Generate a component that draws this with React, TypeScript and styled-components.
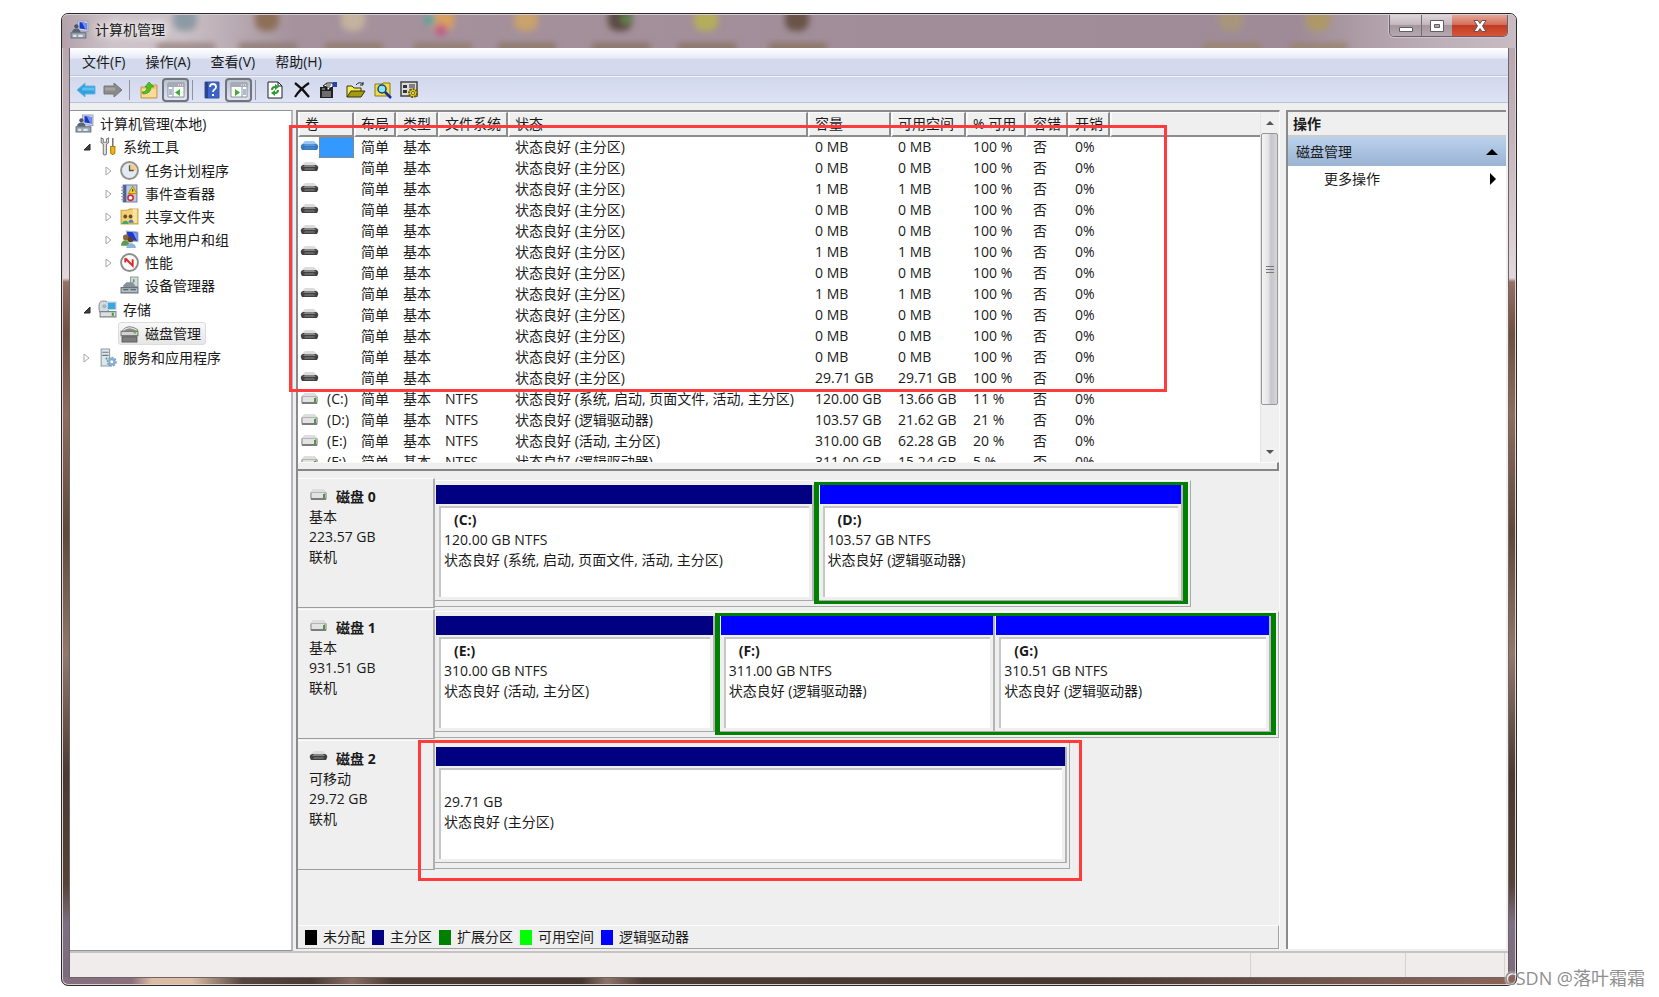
import React from 'react';
import styled, { createGlobalStyle, css } from 'styled-components';

const GlobalStyle = createGlobalStyle`
  * { box-sizing: border-box; }
  body {
    margin: 0;
    background: #fff;
    color: #1a1a1a;
    font-family: 'Open Sans', 'Noto Sans CJK SC', sans-serif;
    font-size: 14px;
    line-height: 20px;
  }
  button { font: inherit; color: inherit; border: 0; background: none; padding: 0; }
  ul { list-style: none; margin: 0; padding: 0; }
  svg { display: block; flex: none; }
`;

/* ---------- window frame ---------- */

const Page = styled.div`
  position: relative;
  min-height: 100vh;
  padding: 13px 142px 11px 61px;
  display: flex;
`;

const Window = styled.div`
  flex: 1;
  min-width: 0;
  display: flex;
  flex-direction: column;
  padding: 0 8px 8px;
  border: 1px solid #2c282b;
  border-radius: 7px;
  box-shadow: inset 0 0 0 1px #d9d0d5;
  background:
    linear-gradient(90deg, #84707f 0, #8c6f7c 70px, #dcbca2 90px, #dcbca2 130px, #55473f 180px, #493b33 250px, #8a6f62 290px, #493a31 330px, #453730 520px, #8f7567 545px, #4b3c33 580px, #46372f 70%, #7a5a4f 90%, #8c6457 100%) bottom / 100% 8px no-repeat,
    linear-gradient(180deg, #b3a2ab 0, #c3b3ba 120px, #e2d8dc 264px, #957064 268px, #6f4f3f 320px, #8d6c5d 400px, #5f4839 520px, #93776b 640px, #4b3a30 760px, #564236 870px, #7e7084 910px, #7a6b7a 100%);
`;

const TitleBar = styled.header`
  position: relative;
  height: 34px;
  margin: 0 -8px;
  padding: 0 8px;
  border-radius: 6px 6px 0 0;
  border-top: 1px solid #d6ced2;
  overflow: hidden;
  display: flex;
  justify-content: space-between;
  background: linear-gradient(90deg, #b3a1aa 0, #cdc3c8 50px, #cbc1c6 120px, #a5929d 230px, #a18d99 60%, #9e8b97 85%, #b9abb3 93%, #c8bcc2 100%);
`;

const Backdrop = styled.svg`
  position: absolute;
  inset: 0;
`;

const Title = styled.h1`
  position: relative;
  margin: 0;
  padding-bottom: 4px;
  display: flex;
  align-items: center;
  gap: 6px;
  font-size: 14px;
  font-weight: 400;
  text-shadow: 0 0 8px #fff, 0 0 8px #fff;
`;

const Captions = styled.div`
  position: relative;
  display: flex;
  height: 22px;
  border: 1px solid #6b5f66;
  border-top: 0;
  border-radius: 0 0 5px 5px;
  overflow: hidden;
  box-shadow: 0 0 0 1px #cfc4ca;
`;

const CaptionButton = styled.button<{ $close?: boolean }>`
  width: ${p => (p.$close ? 55 : 31)}px;
  display: grid;
  place-items: center;
  border-left: ${p => (p.$close ? 0 : 1)}px solid #776a71;
  background: ${p =>
    p.$close
      ? 'linear-gradient(180deg, #e6a596 0, #d2705c 45%, #c23a22 50%, #d4573c 100%)'
      : 'linear-gradient(180deg, #ddd5d9 0, #c4b8be 45%, #a5979e 50%, #b5a8ae 100%)'};
  &:first-child { border-left: 0; }
`;

const Client = styled.div`
  flex: 1;
  display: flex;
  flex-direction: column;
  background: #efefef;
  box-shadow: 0 0 0 1px #6d6468;
`;

/* ---------- menu and toolbar ---------- */

const MenuBar = styled.nav`
  height: 28px;
  padding-left: 2px;
  display: flex;
  align-items: center;
  border-bottom: 1px solid #c3c6d2;
  background: linear-gradient(180deg, #fff 0, #e8ebf7 10px, #d4daed 11px, #d4daed 100%);
`;

const MenuItem = styled.button`
  padding: 0 10px;
`;

const ToolBar = styled.div`
  height: 27px;
  padding-left: 2px;
  display: flex;
  align-items: center;
  border-top: 1px solid #f3f5fb;
  border-bottom: 1px solid #b9c2d8;
  background: linear-gradient(180deg, #d2d8ec, #dde2f4);
`;

const ToolButton = styled.button<{ $pressed?: boolean }>`
  width: 27px;
  height: 24px;
  display: grid;
  place-items: center;
  border-radius: 4px;
  ${p =>
    p.$pressed &&
    css`
      border: 2px solid #6f757f;
      background: linear-gradient(180deg, #bcc2cf, #dfe3ee);
    `}
`;

const ToolSeparator = styled.span`
  width: 1px;
  height: 20px;
  margin: 0 5px 0 3px;
  background: #8d93a3;
`;

/* ---------- three panes ---------- */

const Panes = styled.div`
  flex: 1;
  padding-top: 7px;
  display: grid;
  grid-template-columns: 223px minmax(0, 1fr) 220px;
  column-gap: 3px;
  padding-right: 2px;
`;

const TreePane = styled.aside`
  background: #fff;
  border: 1px solid #8f949c;
  border-left: 0;
  border-right-width: 2px;
  border-right-color: #b4b7bd;
  padding: 1px 0 0 1px;
`;

const Branch = styled.ul`
  padding: 1px 0;
`;

const TreeRow = styled.div<{ $level: number }>`
  height: 23px;
  display: flex;
  align-items: center;
  padding-left: ${p => (p.$level === 0 ? 2 : p.$level * 22 - 13)}px;
`;

const Twisty = styled.span`
  width: 16px;
  padding-left: 3px;
`;

const TreeLabel = styled.span<{ $selected?: boolean }>`
  height: 23px;
  display: flex;
  align-items: center;
  gap: 6px;
  padding: 0 4px 0 1px;
  border: 1px solid ${p => (p.$selected ? '#dcdcdc' : 'transparent')};
  border-radius: 3px;
  background: ${p => (p.$selected ? 'linear-gradient(180deg, #f8f8f8, #e6e6e6)' : 'none')};
`;

const CenterPane = styled.main`
  position: relative;
  margin: 0 3px 2px 0;
  display: flex;
  flex-direction: column;
  border-top: 2px solid #8a8a8a;
  border-left: 2px solid #8a8a8a;
  border-right: 1px solid #fafafa;
`;

const ActionPane = styled.aside`
  margin-bottom: 2px;
  background: #fff;
  border-top: 2px solid #8a8a8a;
  border-left: 2px solid #8a8a8a;
`;

/* ---------- volume list ---------- */

const VolumeArea = styled.section`
  display: flex;
  height: 350px;
  background: #fff;
`;

const VolumeClip = styled.div`
  flex: 1;
  min-width: 0;
  overflow: hidden;
`;

const VolumeTable = styled.table`
  width: 100%;
  table-layout: fixed;
  border-collapse: separate;
  border-spacing: 0;
  white-space: nowrap;

  th {
    height: 25px;
    padding: 0 0 0 5px;
    text-align: left;
    font-weight: 400;
    background: #efefef;
    border-right: 2px solid #8c8c8c;
    border-bottom: 2px solid #8c8c8c;
    border-left: 2px solid #fbfbfb;
    border-top: 1px solid #fbfbfb;
  }
  th:last-child { border-right: 0; }
  td {
    height: 21px;
    padding: 0 0 1px 7px;
    line-height: 20px;
    vertical-align: top;
  }
  td:first-child { padding: 0 0 0 2px; }
`;

const VolumeName = styled.span`
  display: flex;
  align-items: flex-start;
  height: 21px;

  svg { margin-top: 4px; }
`;

const DriveLetter = styled.span<{ $selected?: boolean }>`
  flex: 1;
  height: 21px;
  padding-left: 8px;
  ${p =>
    p.$selected &&
    css`
      background: #3399ff;
      border: 1px dotted #c8793a;
    `}
`;

const ScrollBar = styled.div`
  width: 19px;
  padding-right: 1px;
  display: flex;
  flex-direction: column;
  background: #f0f0f0;
  border-left: 1px solid #e4e4e4;
`;

const ScrollArrow = styled.button`
  height: 21px;
  display: grid;
  place-items: center;
`;

const ScrollTrack = styled.div`
  flex: 1;
`;

const ScrollThumb = styled.div`
  height: 272px;
  display: grid;
  place-items: center;
  border: 1px solid #979797;
  border-radius: 2px;
  background: linear-gradient(90deg, #f4f4f4 0, #e6e6e8 40%, #c6c6ca 60%, #d6d6da 100%);
`;

const Splitter = styled.div`
  height: 9px;
  border-top: 1px solid #fafafa;
  border-bottom: 2px solid #858585;
  border-right: 2px solid #858585;
`;

/* ---------- graphical disk view ---------- */

const DiskList = styled.section`
  flex: 1;
  padding-top: 7px;
`;

const DiskRow = styled.div`
  height: 131px;
  display: flex;
`;

const DiskInfo = styled.div`
  flex: none;
  width: 137px;
  height: 130px;
  padding: 8px 0 0 11px;
  border-top: 1px solid #fcfcfc;
  border-right: 2px solid #b0b0b0;
  border-bottom: 1px solid #9c9c9c;
`;

const DiskTitle = styled.h2`
  margin: 0;
  display: flex;
  gap: 8px;
  font-size: 14px;
  line-height: 20px;

  svg { margin-top: 2px; }
`;

const Line = styled.div`
  height: 20px;
  white-space: nowrap;
`;

const Track = styled.div<{ $share: number }>`
  position: relative;
  flex: ${p => p.$share} 1 0;
  min-width: 0;
  height: 127px;
  margin-top: 2px;
  padding: 1px 2px 2px 0;
  display: flex;
  border-top: 1px solid #fcfcfc;
  border-right: 1px solid #a8a8a8;
  border-bottom: 1px solid #a8a8a8;
`;

const TrackRest = styled.div<{ $share: number }>`
  flex: ${p => p.$share} 1 0;
`;

const Segment = styled.div<{ $share: number; $primary?: boolean }>`
  flex: ${p => p.$share} 1 0;
  min-width: 0;
  margin: ${p => (p.$primary ? '3px 0' : '0')};
  display: flex;
  flex-direction: column;
  border-right: 2px solid #b4b4b4;
  border-bottom: 1px solid #a8a8a8;
`;

const Extended = styled.div<{ $share: number }>`
  flex: ${p => p.$share} 1 0;
  min-width: 0;
  display: flex;
  border: solid #008000;
  border-width: 3px 5px;
`;

const ColorBar = styled.div<{ $color: string }>`
  height: 19px;
  margin-left: 1px;
  background: ${p => p.$color};
`;

const SegmentBody = styled.div`
  flex: 1;
  margin: 2px 3px 3px 4px;
  padding: 2px 0 0 3px;
  overflow: hidden;
  background: #fff;
  border-top: 2px solid #c6c6c6;
  border-left: 2px solid #c6c6c6;
`;

const Letter = styled.div`
  height: 20px;
  padding-left: 10px;
  font-weight: 700;
`;

const Legend = styled.footer`
  height: 24px;
  padding-left: 7px;
  display: flex;
  align-items: center;
  gap: 7px;
  border-top: 1px solid #fcfcfc;
  border-right: 1px solid #a0a0a0;
  border-bottom: 1px solid #a0a0a0;
`;

const LegendItem = styled.span`
  display: flex;
  align-items: center;
  gap: 6px;
`;

const Swatch = styled.i<{ $color: string }>`
  width: 12px;
  height: 15px;
  background: ${p => p.$color};
`;

/* ---------- actions pane ---------- */

const ActionHeading = styled.h2`
  margin: 0;
  height: 25px;
  padding-left: 5px;
  font-size: 14px;
  line-height: 23px;
  background: #efefef;
  border-bottom: 2px solid #cdcdcd;
`;

const ActionGroup = styled.button`
  width: 100%;
  height: 29px;
  padding: 0 8px;
  display: flex;
  align-items: center;
  justify-content: space-between;
  background: linear-gradient(180deg, #bad2ec, #9ab3d3);
`;

const ActionItem = styled.button`
  width: 100%;
  height: 26px;
  padding: 0 10px 0 36px;
  display: flex;
  align-items: center;
  justify-content: space-between;
`;

/* ---------- status bar, markers, credit ---------- */

const StatusBar = styled.div`
  height: 26px;
  padding-right: 3px;
  display: flex;
  justify-content: flex-end;
  border-top: 2px solid #c4c4c4;
  background: #f0eceb;
`;

const StatusCell = styled.span<{ $width: number }>`
  width: ${p => p.$width}px;
  border-left: 1px solid #d6d2d1;
  &:last-child { border-right: 1px solid #d6d2d1; }
`;

const ListMarker = styled.div`
  position: absolute;
  left: -9px;
  top: 13px;
  width: 878px;
  height: 267px;
  border: 3px solid #ff3b3b;
  pointer-events: none;
`;

const DiskMarker = styled.div`
  position: absolute;
  inset: -3px -13px -13px -17px;
  border: 3px solid #ff3b3b;
  pointer-events: none;
`;

const Credit = styled.span`
  position: absolute;
  right: 14px;
  bottom: 7px;
  font-size: 18px;
  line-height: 24px;
  color: #8f8f8f;
  text-shadow: 0 0 2px #fff, 1px 1px 0 #fff;
`;

/* ---------- icons ---------- */

const MonitorIcon = () => (
  <svg width="19" height="19" viewBox="0 0 18 18">
    <path d="M7 1h10v10l-9-1z" fill="#cfd6e6" stroke="#98a3ba" />
    <path d="M9 2l7 1v6l-7-1z" fill="#1a35c8" />
    <path d="M11 2l3 6 2 1V3z" fill="#6e8ff0" />
    <circle cx="6" cy="6" r="2" fill="#4c5568" />
    <path d="M2 12c0-3 2-4 4-4s4 1 4 4z" fill="#5a6578" />
    <path d="M1 12h14v5H1z" fill="#9aa7b4" stroke="#66727f" />
    <path d="M3 14h3v2H3zM8 14h4v2H8z" fill="#dfe6ec" />
  </svg>
);
const ToolsIcon = () => (
  <svg width="19" height="19" viewBox="0 0 18 18">
    <path d="M3 1v4l2 2v9q1.500 2 3 0V7l2-2V1L8 2v3H5V2z" fill="#e2e2e2" stroke="#7a7a7a" />
    <path d="M14 1v8" stroke="#777" strokeWidth="1.500" />
    <path d="M12 9h4v6q-2 3-4 0z" fill="#f2b51c" stroke="#b47c00" />
  </svg>
);
const ClockIcon = () => (
  <svg width="19" height="19" viewBox="0 0 18 18">
    <circle cx="9" cy="9" r="8" fill="#e3eaf3" stroke="#969087" strokeWidth="1.800" />
    <path d="M9 9V2.500a6.500 6.500 0 0 1 6.500 6.500z" fill="#f3cf85" />
    <path d="M9 4v5h4" fill="none" stroke="#555" strokeWidth="1.200" />
  </svg>
);
const EventIcon = () => (
  <svg width="19" height="19" viewBox="0 0 18 18">
    <path d="M3 1h13v16H3z" fill="#b9c9e2" stroke="#6d7f9f" />
    <path d="M3 1h3v16H3z" fill="#4a5f92" />
    <path d="M1 3h3M1 6h3M1 9h3M1 12h3M1 15h3" stroke="#8a93a5" />
    <path d="M12 2l4 7H8z" fill="#f5cf28" stroke="#a88400" strokeWidth=".8" />
    <path d="M12 5v2" stroke="#222" />
    <circle cx="10" cy="13" r="2.500" fill="#fff" stroke="#d8262c" strokeWidth="1.500" />
  </svg>
);
const SharedIcon = () => (
  <svg width="19" height="19" viewBox="0 0 18 18">
    <path d="M1 3h6l2-1h8v14H1z" fill="#f1cf72" stroke="#cba344" />
    <path d="M12 2h4v13h-4z" fill="#f9e3a0" />
    <circle cx="5" cy="9" r="1.800" fill="#6b4a2c" />
    <circle cx="10" cy="9" r="1.800" fill="#6b4a2c" />
    <path d="M2 16c0-4 6-4 6 0z" fill="#45a766" />
    <path d="M8 15c0-4 5-4 5 0z" fill="#4585c4" />
  </svg>
);
const UsersIcon = () => (
  <svg width="19" height="19" viewBox="0 0 18 18">
    <path d="M6 1l11 1v9L7 10z" fill="#1b3ad0" stroke="#aab5cf" />
    <path d="M12 2l4 8V3z" fill="#7f9df2" />
    <path d="M1 15c0-7 8-7 8 0z" fill="#5e9a4d" />
    <path d="M6 17c0-6 9-6 9 0z" fill="#8ab6dd" />
    <circle cx="5.500" cy="7" r="2.700" fill="#8a6a3c" />
    <circle cx="10" cy="9" r="2.700" fill="#5b402a" />
  </svg>
);
const PerfIcon = () => (
  <svg width="19" height="19" viewBox="0 0 18 18">
    <circle cx="9" cy="9" r="8" fill="#fafafa" stroke="#8e8e8e" strokeWidth="1.800" />
    <path d="M5 5v4M5 5l7 7V6" fill="none" stroke="#e02626" strokeWidth="1.800" />
  </svg>
);
const DeviceIcon = () => (
  <svg width="19" height="19" viewBox="0 0 18 18">
    <path d="M10 1h7v9h-7z" fill="#d6dadd" stroke="#949aa0" />
    <path d="M13 3v3" stroke="#3bb34a" strokeWidth="1.500" />
    <path d="M3 9l3-3h6l3 4v2H3z" fill="#86929a" />
    <path d="M1 11h16v5H1z" fill="#b4bfc6" stroke="#66737b" />
    <path d="M3 13h5M10 13h5" stroke="#3e4a52" />
  </svg>
);
const StorageIcon = () => (
  <svg width="19" height="19" viewBox="0 0 18 18">
    <rect x="1" y="1" width="9" height="12" rx="4" fill="#d6dade" stroke="#899097" />
    <circle cx="6" cy="6" r="2" fill="#9fb6c4" />
    <path d="M9 2h8v7H9z" fill="#3aa6dc" stroke="#b9d3e0" />
    <path d="M2 11h15v5H2z" fill="#dde0e2" stroke="#7d8386" />
    <path d="M14 12v3" stroke="#2ea836" strokeWidth="2" />
  </svg>
);
const DiskManageIcon = () => (
  <svg width="19" height="19" viewBox="0 0 18 18">
    <path d="M2 6q6-7 15-1v4H2z" fill="#8c8c8c" />
    <path d="M3 6q6-5 13 0" fill="none" stroke="#eee" />
    <path d="M1 7h16v4H1z" fill="#d2d2d2" stroke="#7b7b7b" />
    <path d="M2 12h14v5H2z" fill="#7d7d7d" stroke="#5a5a5a" />
    <path d="M14 6v3" stroke="#4db92e" strokeWidth="2" />
  </svg>
);
const ServicesIcon = () => (
  <svg width="19" height="19" viewBox="0 0 18 18">
    <path d="M3 1h8v16H3z" fill="#dde6ea" stroke="#8b9aa3" />
    <path d="M4 4h6M4 7h6" stroke="#6b7a85" />
    <path d="M8 9v2" stroke="#44b54e" strokeWidth="1.500" />
    <circle cx="13" cy="13" r="4" fill="none" stroke="#7ea3c6" strokeWidth="1.500" strokeDasharray="2 1" />
    <circle cx="13" cy="13" r="2.500" fill="none" stroke="#86abd0" strokeWidth="2" />
  </svg>
);

const UsbDrive = ({ blue }: { blue?: boolean }) => (
  <svg width="19" height="11" viewBox="0 0 19 11">
    <path d="M5 0h9l4 4H1z" fill={blue ? '#9cc6f2' : '#dcdcdc'} />
    <path d="M3 3h13q3 1 2 4l-1 2H2L1 7q-1-3 2-4z" fill={blue ? '#3a78bd' : '#404040'} />
    <path d="M5 3h9l2 2H3z" fill={blue ? '#5a96d8' : '#858585'} />
    <path d="M5 6h9l1 2H4z" fill={blue ? '#4384c8' : '#666'} />
  </svg>
);
const HardDrive = () => (
  <svg width="19" height="12" viewBox="0 0 19 12">
    <path d="M5 0h9l4 4v5l-1 2H2L1 9V4z" fill="#b4b4b4" />
    <path d="M5 0h9l3 3H2z" fill="#dedede" />
    <path d="M3 4h12v5H3z" fill="#e2e2e2" />
    <path d="M2 9h15v2H2z" fill="#7c7c7c" />
    <path d="M15 5v4" stroke="#4a9a3a" strokeWidth="2" />
  </svg>
);

const Triangle = ({ d, w, h, fill = '#000', stroke }: { d: string; w: number; h: number; fill?: string; stroke?: string }) => (
  <svg width={w} height={h} viewBox={`0 0 ${w} ${h}`}>
    <path d={d} fill={fill} stroke={stroke} />
  </svg>
);

const ArrowIcon = ({ forward }: { forward?: boolean }) => (
  <svg width="20" height="16" viewBox="0 0 20 16">
    <path
      d={forward ? 'M19 8l-8-7v3H1v8h10v3z' : 'M1 8l8-7v3h10v8H9v3z'}
      fill={forward ? '#8a8a8a' : '#2fa0e0'}
      stroke={forward ? '#777' : '#6fb1da'}
    />
    <path d={forward ? 'M2 7h10' : 'M6 7h12'} stroke={forward ? '#a4a4a4' : '#5cc0f0'} strokeWidth="3" />
  </svg>
);
const FolderUpIcon = () => (
  <svg width="18" height="18" viewBox="0 0 18 18">
    <path d="M1 6h6l1-2h9v13H1z" fill="#efc873" stroke="#c79b45" />
    <path d="M2 8h14v8H2z" fill="#f6dc98" />
    <path d="M2 11q5 0 5-5H5l4-5 5 5h-3q0 7-8 7z" fill="#4fc01f" stroke="#2f8c10" strokeWidth=".6" />
  </svg>
);
const PaneIcon = ({ right }: { right?: boolean }) => (
  <svg width="18" height="16" viewBox="0 0 18 16">
    <path d="M1 1h16v14H1z" fill="#fff" stroke="#8b9199" />
    <path d="M1 1h16v4H1z" fill="#a4abb4" />
    <path d="M11 3h1M13 3h1M15 3h1" stroke="#fff" />
    <path d={right ? 'M12 5v10' : 'M6 5v10'} stroke="#8b9199" />
    <path d={right ? 'M13 8h3M13 10h3M13 12h3' : 'M2 8h3M2 10h3M2 12h3'} stroke="#5479b5" />
    <path d={right ? 'M5 7l5 3.500-5 3.500z' : 'M13 7l-5 3.500 5 3.500z'} fill="#3eae2c" />
  </svg>
);
const HelpIcon = () => (
  <svg width="16" height="18" viewBox="0 0 16 18">
    <path d="M1 1h14v16H1z" fill="#3c63c8" stroke="#3a569f" />
    <path d="M1 1h3v16H1z" fill="#28458f" />
    <path d="M6 6q0-3 3-3t3 3q0 1.500-1.500 2.500T9 11" fill="none" stroke="#fff" strokeWidth="1.800" />
    <path d="M8 13h2v2H8z" fill="#fff" />
  </svg>
);
const RefreshIcon = () => (
  <svg width="16" height="18" viewBox="0 0 16 18">
    <path d="M1 1h10l4 4v12H1z" fill="#fff" stroke="#222" />
    <path d="M11 1v4h4" fill="none" stroke="#222" />
    <path d="M4 9q0-4 4-4V3l4 3-4 3V7q-2 0-2 2zM12 9q0 4-4 4v2l-4-3 4-3v2q2 0 2-2z" fill="#2c9c34" />
  </svg>
);
const DeleteIcon = () => (
  <svg width="18" height="18" viewBox="0 0 18 18">
    <path d="M2 2q8 6 14 14M16 2Q7 8 2 16" fill="none" stroke="#111" strokeWidth="2.200" />
  </svg>
);
const PropertiesIcon = () => (
  <svg width="19" height="18" viewBox="0 0 19 18">
    <path d="M1 6h13v11H1z" fill="#222" />
    <path d="M3 8h3M3 11h9M3 13h9M3 15h9" stroke="#b8b8b8" />
    <path d="M4 5l4-3h6v4l-3 1-1 2H8V6z" fill="#fff" stroke="#111" />
    <path d="M7 4h5M8 6h3" stroke="#333" />
    <path d="M14 1h4v5h-4z" fill="#2945a8" />
  </svg>
);
const OpenIcon = () => (
  <svg width="20" height="18" viewBox="0 0 20 18">
    <path d="M1 16V5h5l2 2h7v3" fill="#f3ec62" stroke="#3a3600" />
    <path d="M1 16l4-6h14l-4 6z" fill="#a39a12" stroke="#3a3600" />
    <path d="M10 4q3-4 7-1M17 1v3h-3" fill="none" stroke="#222" />
  </svg>
);
const SearchIcon = () => (
  <svg width="18" height="18" viewBox="0 0 18 18">
    <path d="M1 3h7l1-1h7v13H1z" fill="#f0dc4a" stroke="#8a7a10" />
    <circle cx="8" cy="8" r="4" fill="#8fe4f2" stroke="#15457c" strokeWidth="1.500" />
    <path d="M11 11l6 6" stroke="#12309c" strokeWidth="2.500" />
  </svg>
);
const SettingsIcon = () => (
  <svg width="19" height="18" viewBox="0 0 19 18">
    <path d="M1 1h16v14H1z" fill="#dcdcdc" stroke="#444" strokeWidth="1.500" />
    <path d="M3 4h4v3H3zM3 9h4v3H3z" fill="#333" />
    <path d="M9 4h6M9 6h6M9 9h3" stroke="#222" />
    <circle cx="13" cy="12" r="4" fill="#e8d020" stroke="#6b5c00" strokeWidth="2" strokeDasharray="2 1" />
    <circle cx="13" cy="12" r="1.500" fill="#fff" stroke="#6b5c00" />
  </svg>
);

/* ---------- data ---------- */

const columns: [string, number][] = [
  ['卷', 56], ['布局', 42], ['类型', 42], ['文件系统', 70], ['状态', 300],
  ['容量', 83], ['可用空间', 75], ['% 可用', 60], ['容错', 42], ['开销', 42],
];

type Volume = { letter?: string; fs?: string; state: string; size: string; free: string; pct: string };

const raw = (size: string): Volume => ({ state: '状态良好 (主分区)', size, free: size, pct: '100 %' });

const volumes: Volume[] = [
  ...['0 MB', '0 MB', '1 MB', '0 MB', '0 MB', '1 MB', '0 MB', '1 MB', '0 MB', '0 MB', '0 MB', '29.71 GB'].map(raw),
  { letter: '(C:)', fs: 'NTFS', state: '状态良好 (系统, 启动, 页面文件, 活动, 主分区)', size: '120.00 GB', free: '13.66 GB', pct: '11 %' },
  { letter: '(D:)', fs: 'NTFS', state: '状态良好 (逻辑驱动器)', size: '103.57 GB', free: '21.62 GB', pct: '21 %' },
  { letter: '(E:)', fs: 'NTFS', state: '状态良好 (活动, 主分区)', size: '310.00 GB', free: '62.28 GB', pct: '20 %' },
  { letter: '(F:)', fs: 'NTFS', state: '状态良好 (逻辑驱动器)', size: '311.00 GB', free: '15.24 GB', pct: '5 %' },
];

type Part = { letter?: string; size: string; state: string; share: number };
type Disk = { name: string; kind: string; size: string; usb?: boolean; share: number; marked?: boolean; primary: Part; logical?: { share: number; parts: Part[] } };

const disks: Disk[] = [
  {
    name: '磁盘 0', kind: '基本', size: '223.57 GB', share: 757,
    primary: { letter: '(C:)', size: '120.00 GB NTFS', state: '状态良好 (系统, 启动, 页面文件, 活动, 主分区)', share: 383 },
    logical: { share: 371, parts: [{ letter: '(D:)', size: '103.57 GB NTFS', state: '状态良好 (逻辑驱动器)', share: 1 }] },
  },
  {
    name: '磁盘 1', kind: '基本', size: '931.51 GB', share: 845,
    primary: { letter: '(E:)', size: '310.00 GB NTFS', state: '状态良好 (活动, 主分区)', share: 282 },
    logical: {
      share: 560,
      parts: [
        { letter: '(F:)', size: '311.00 GB NTFS', state: '状态良好 (逻辑驱动器)', share: 1 },
        { letter: '(G:)', size: '310.51 GB NTFS', state: '状态良好 (逻辑驱动器)', share: 1 },
      ],
    },
  },
  {
    name: '磁盘 2', kind: '可移动', size: '29.72 GB', usb: true, share: 635, marked: true,
    primary: { size: '29.71 GB', state: '状态良好 (主分区)', share: 1 },
  },
];

const FULL_SHARE = 845;

const legend: [string, string][] = [
  ['未分配', '#000'], ['主分区', '#000080'], ['扩展分区', '#008000'], ['可用空间', '#00ff00'], ['逻辑驱动器', '#0000ff'],
];

/* Desktop shortcuts seen through the glass title bar: centre, icon tint, caption tint. */
const shortcuts: [number, string, string][] = [
  [122, '#8e9aa3', '#9a8785'], [204, '#8d7058', '#8f7b74'], [290, '#c4b39f', '#927d6e'], [379, '#d9a05e', '#927d70'],
  [463, '#c9a26c', '#8d7867'], [557, '#5c4c44', '#8a7467'], [643, '#b4ae5c', '#8a7568'], [734, '#6b5348', '#8a7462'],
  [1168, '#a8967c', '#9a846e'], [1255, '#ae9868', '#9a846e'],
];

/* ---------- composed parts ---------- */

type NodeProps = { level: number; icon: React.ReactNode; text: string; open?: boolean; closed?: boolean; selected?: boolean; children?: React.ReactNode };

const TreeNode = ({ level, icon, text, open, closed, selected, children }: NodeProps) => (
  <li>
    <TreeRow $level={level}>
      {level > 0 && (
        <Twisty>
          {open && <Triangle w={8} h={8} d="M7 1v6H1z" fill="#404040" stroke="#262626" />}
          {closed && <Triangle w={7} h={10} d="M1 1l5 4-5 4z" fill="#fff" stroke="#a6a6a6" />}
        </Twisty>
      )}
      <TreeLabel $selected={selected}>{icon}{text}</TreeLabel>
    </TreeRow>
    {children && <Branch>{children}</Branch>}
  </li>
);

const PartView = ({ part, color, primary }: { part: Part; color: string; primary?: boolean }) => (
  <Segment $share={part.share} $primary={primary}>
    <ColorBar $color={color} />
    <SegmentBody>
      <Letter>{part.letter}</Letter>
      <Line>{part.size}</Line>
      <Line>{part.state}</Line>
    </SegmentBody>
  </Segment>
);

export default function App() {
  return (
    <>
      <GlobalStyle />
      <Page>
        <Window>
          <TitleBar>
            <Backdrop width="1455" height="34" aria-hidden>
              <defs>
                <filter id="soft" x="-50%" y="-50%" width="200%" height="200%">
                  <feGaussianBlur stdDeviation="3" />
                </filter>
              </defs>
              <g filter="url(#soft)">
                {shortcuts.map(([x, icon, label]) => (
                  <g key={x}>
                    <rect x={x - 11} y="-8" width="24" height="24" rx="9" fill={icon} />
                    <rect x={x - 27} y="28" width="58" height="8" fill={label} />
                  </g>
                ))}
                <circle cx="379" cy="15" r="6" fill="#c25a86" />
                <circle cx="368" cy="5" r="6" fill="#5fa3a0" />
                <circle cx="564" cy="4" r="5" fill="#5e8a48" />
              </g>
            </Backdrop>
            <Title><MonitorIcon />计算机管理</Title>
            <Captions>
              <CaptionButton aria-label="最小化">
                <svg width="16" height="14" viewBox="0 0 16 14"><path d="M1.500 8.500h13v4h-13z" fill="#fff" stroke="#625b60" /></svg>
              </CaptionButton>
              <CaptionButton aria-label="最大化">
                <svg width="16" height="14" viewBox="0 0 16 14">
                  <path d="M1.500 1.500h13v11h-13z" fill="#fff" stroke="#625b60" />
                  <path d="M5.500 5.500h5v3h-5z" fill="#b5a9af" stroke="#625b60" />
                </svg>
              </CaptionButton>
              <CaptionButton $close aria-label="关闭">
                <svg width="14" height="14" viewBox="0 0 14 14">
                  <path d="M1 1.500h4l2 3 2-3h4L9.500 7l3.500 5.500H9l-2-3-2 3H1L4.500 7z" fill="#fff" stroke="#6b4f55" />
                </svg>
              </CaptionButton>
            </Captions>
          </TitleBar>

          <Client>
            <MenuBar>
              {['文件(F)', '操作(A)', '查看(V)', '帮助(H)'].map(m => <MenuItem key={m}>{m}</MenuItem>)}
            </MenuBar>
            <ToolBar>
              <ToolButton aria-label="后退"><ArrowIcon /></ToolButton>
              <ToolButton aria-label="前进"><ArrowIcon forward /></ToolButton>
              <ToolSeparator />
              <ToolButton aria-label="上一级"><FolderUpIcon /></ToolButton>
              <ToolButton $pressed aria-label="控制台树"><PaneIcon /></ToolButton>
              <ToolSeparator />
              <ToolButton aria-label="帮助"><HelpIcon /></ToolButton>
              <ToolButton $pressed aria-label="操作窗格"><PaneIcon right /></ToolButton>
              <ToolSeparator />
              <ToolButton aria-label="刷新"><RefreshIcon /></ToolButton>
              <ToolButton aria-label="删除"><DeleteIcon /></ToolButton>
              <ToolButton aria-label="属性"><PropertiesIcon /></ToolButton>
              <ToolButton aria-label="打开"><OpenIcon /></ToolButton>
              <ToolButton aria-label="查找"><SearchIcon /></ToolButton>
              <ToolButton aria-label="设置"><SettingsIcon /></ToolButton>
            </ToolBar>

            <Panes>
              <TreePane>
                <ul>
                  <TreeNode level={0} icon={<MonitorIcon />} text="计算机管理(本地)" />
                  <TreeNode level={1} open icon={<ToolsIcon />} text="系统工具">
                    <TreeNode level={2} closed icon={<ClockIcon />} text="任务计划程序" />
                    <TreeNode level={2} closed icon={<EventIcon />} text="事件查看器" />
                    <TreeNode level={2} closed icon={<SharedIcon />} text="共享文件夹" />
                    <TreeNode level={2} closed icon={<UsersIcon />} text="本地用户和组" />
                    <TreeNode level={2} closed icon={<PerfIcon />} text="性能" />
                    <TreeNode level={2} icon={<DeviceIcon />} text="设备管理器" />
                  </TreeNode>
                  <TreeNode level={1} open icon={<StorageIcon />} text="存储">
                    <TreeNode level={2} selected icon={<DiskManageIcon />} text="磁盘管理" />
                  </TreeNode>
                  <TreeNode level={1} closed icon={<ServicesIcon />} text="服务和应用程序" />
                </ul>
              </TreePane>

              <CenterPane>
                <VolumeArea>
                  <VolumeClip>
                    <VolumeTable>
                      <colgroup>
                        {columns.map(([name, width]) => <col key={name} width={width} />)}
                        <col />
                      </colgroup>
                      <thead>
                        <tr>
                          {columns.map(([name]) => <th key={name} scope="col">{name}</th>)}
                          <th aria-hidden />
                        </tr>
                      </thead>
                      <tbody>
                        {volumes.map((v, i) => (
                          <tr key={i}>
                            <td>
                              <VolumeName>
                                {v.letter ? <HardDrive /> : <UsbDrive blue={i === 0} />}
                                <DriveLetter $selected={i === 0}>{v.letter}</DriveLetter>
                              </VolumeName>
                            </td>
                            <td>简单</td>
                            <td>基本</td>
                            <td>{v.fs}</td>
                            <td>{v.state}</td>
                            <td>{v.size}</td>
                            <td>{v.free}</td>
                            <td>{v.pct}</td>
                            <td>否</td>
                            <td>0%</td>
                            <td />
                          </tr>
                        ))}
                      </tbody>
                    </VolumeTable>
                  </VolumeClip>
                  <ScrollBar>
                    <ScrollArrow aria-label="向上滚动"><Triangle w={8} h={4} d="M0 4l4-4 4 4z" fill="#555" /></ScrollArrow>
                    <ScrollTrack>
                      <ScrollThumb>
                        <svg width="8" height="8" viewBox="0 0 8 8"><path d="M0 1.500h8M0 4.500h8M0 7.500h8" stroke="#777" /></svg>
                      </ScrollThumb>
                    </ScrollTrack>
                    <ScrollArrow aria-label="向下滚动"><Triangle w={8} h={4} d="M0 0h8L4 4z" fill="#555" /></ScrollArrow>
                  </ScrollBar>
                </VolumeArea>
                <Splitter />
                <DiskList>
                  {disks.map(d => (
                    <DiskRow key={d.name}>
                      <DiskInfo>
                        <DiskTitle>{d.usb ? <UsbDrive /> : <HardDrive />}{d.name}</DiskTitle>
                        <Line>{d.kind}</Line>
                        <Line>{d.size}</Line>
                        <Line>联机</Line>
                      </DiskInfo>
                      <Track $share={d.share}>
                        <PartView part={d.primary} color="#000080" primary />
                        {d.logical && (
                          <Extended $share={d.logical.share}>
                            {d.logical.parts.map(p => <PartView key={p.letter} part={p} color="#0000ff" />)}
                          </Extended>
                        )}
                        {d.marked && <DiskMarker />}
                      </Track>
                      {d.share < FULL_SHARE && <TrackRest $share={FULL_SHARE - d.share} />}
                    </DiskRow>
                  ))}
                </DiskList>
                <Legend>
                  {legend.map(([name, color]) => (
                    <LegendItem key={name}><Swatch $color={color} />{name}</LegendItem>
                  ))}
                </Legend>
                <ListMarker />
              </CenterPane>

              <ActionPane>
                <ActionHeading>操作</ActionHeading>
                <ActionGroup>磁盘管理<Triangle w={12} h={6} d="M0 6l6-6 6 6z" /></ActionGroup>
                <ActionItem>更多操作<Triangle w={6} h={12} d="M0 0l6 6-6 6z" /></ActionItem>
              </ActionPane>
            </Panes>

            <StatusBar>
              <StatusCell $width={155} />
              <StatusCell $width={100} />
            </StatusBar>
          </Client>
        </Window>
        <Credit>CSDN @落叶霜霜</Credit>
      </Page>
    </>
  );
}
